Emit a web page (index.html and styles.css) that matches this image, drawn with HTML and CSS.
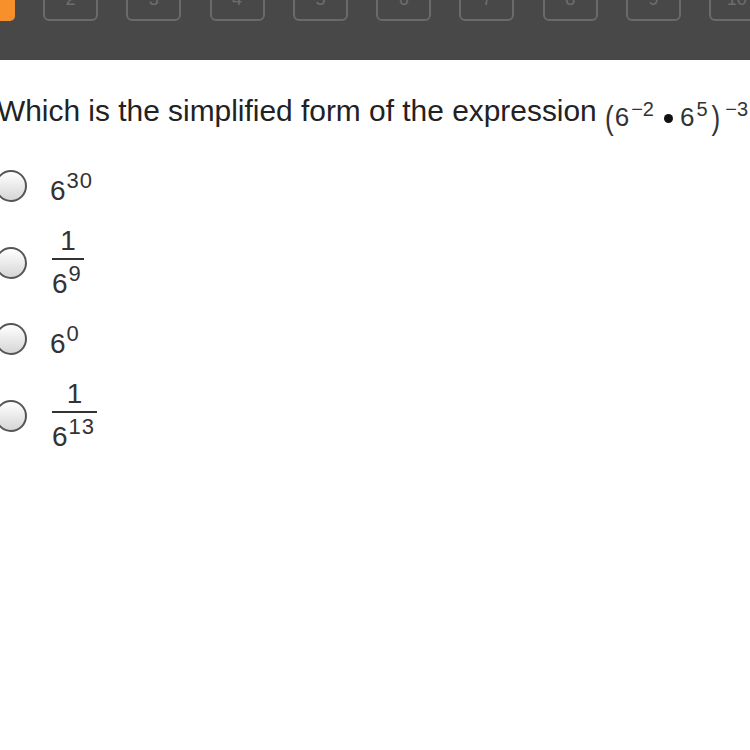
FILE: index.html
```html
<!DOCTYPE html>
<html>
<head>
<meta charset="utf-8">
<link rel="stylesheet" href="styles.css">
</head>
<body>
<div class="topbar">
  <div class="tab"></div>
  <div class="qnav">
    <div class="qbtn">2</div>
    <div class="qbtn">3</div>
    <div class="qbtn">4</div>
    <div class="qbtn">5</div>
    <div class="qbtn">6</div>
    <div class="qbtn">7</div>
    <div class="qbtn">8</div>
    <div class="qbtn">9</div>
    <div class="qbtn">10</div>
  </div>
</div>
<div class="content">
  <p class="question">Which is the simplified form of the expression <span class="expr"><span class="paren">(</span>6<sup>−2</sup><span class="dot"></span>6<sup>5</sup><span class="paren close">)</span><sup class="outer">−3</sup></span></p>
  <div class="options">
    <div class="option">
      <span class="radio"></span>
      <span class="math">6<sup>30</sup></span>
    </div>
    <div class="option">
      <span class="radio"></span>
      <span class="frac"><span class="num">1</span><span class="den">6<sup>9</sup></span></span>
    </div>
    <div class="option">
      <span class="radio"></span>
      <span class="math">6<sup>0</sup></span>
    </div>
    <div class="option">
      <span class="radio"></span>
      <span class="frac"><span class="num">1</span><span class="den">6<sup>13</sup></span></span>
    </div>
  </div>
</div>
</body>
</html>
```
FILE: styles.css
```css
html, body {
  margin: 0;
  padding: 0;
  background: #ffffff;
}
body {
  width: 750px;
  height: 750px;
  overflow: hidden;
  font-family: "Liberation Sans", Arial, sans-serif;
}
.topbar {
  height: 60px;
  background: #484848;
  display: flex;
  align-items: flex-start;
  overflow: hidden;
}
.tab {
  width: 15px;
  height: 21px;
  background: #f7902a;
  border-bottom-right-radius: 5px;
  flex: none;
}
.qnav {
  display: flex;
  gap: 28.3px;
  margin-left: 28px;
  margin-top: -22px;
}
.qbtn {
  width: 51px;
  height: 29px;
  border: 2px solid #6a6a6a;
  border-radius: 6px;
  color: #6e6e6e;
  font-size: 18px;
  line-height: 1;
  text-align: center;
  padding-top: 10px;
  box-sizing: content-box;
  flex: none;
}
.content {
  margin-left: -3px;
}
.question {
  margin: 0;
  padding-top: 32px;
  font-family: "Liberation Sans", Arial, sans-serif;
  font-size: 29.9px;
  line-height: 38px;
  color: #222222;
  white-space: nowrap;
}
.expr {
  font-size: 26px;
  color: #333333;
  position: relative;
  top: 5px;
}
.expr .paren {
  display: inline-block;
  transform: scaleY(1.3);
  margin-right: 1px;
}
.expr .paren.close {
  margin: 0 3px 0 4px;
}
.expr sup {
  font-size: 20px;
  vertical-align: 10px;
  line-height: 0;
  margin-left: 2px;
}
.expr .dot {
  display: inline-block;
  width: 9px;
  height: 9px;
  border-radius: 50%;
  background: #111;
  margin: 0 7px 2px 10px;
  vertical-align: middle;
}
.options {
  display: flex;
  flex-direction: column;
  gap: 22px;
  margin-top: 36px;
}
.option {
  display: flex;
  align-items: center;
  gap: 23px;
  margin-left: -2px;
}
.radio {
  width: 28px;
  height: 28px;
  border: 2px solid #555555;
  border-radius: 50%;
  background: linear-gradient(#ffffff, #d6d6d6);
  flex: none;
}
.math, .frac {
  font-size: 28px;
  color: #333333;
  line-height: 1;
}
.math {
  padding-top: 10px;
}
.math sup, .den sup {
  font-size: 22px;
  vertical-align: 12px;
  line-height: 0;
  margin-left: 1px;
  letter-spacing: 1px;
}
.frac {
  display: inline-flex;
  flex-direction: column;
  align-items: center;
  padding: 0 2px;
}
.num {
  padding-bottom: 3px;
  border-bottom: 2px solid #333333;
  align-self: stretch;
  text-align: center;
}
.den {
  padding-top: 10px;
  padding-right: 2px;
}
```
